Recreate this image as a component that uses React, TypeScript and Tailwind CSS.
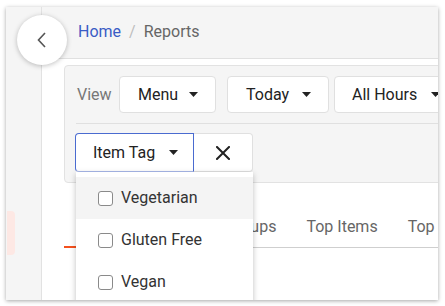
import React from "react";

function Caret() {
  return (
    <svg width="9" height="5" viewBox="0 0 9 5" className="shrink-0">
      <path d="M0 0 L9 0 L4.5 5 Z" fill="#222" />
    </svg>
  );
}

function Checkbox() {
  return <span className="w-[15px] h-[15px] rounded-[3px] border-[1.5px] border-[#8a8a8a] bg-white shrink-0" />;
}

export default function App() {
  return (
    <div
      className="w-[445px] h-[306px] bg-white overflow-hidden pt-[7px] pl-[6px]"
      style={{ fontFamily: "Roboto, 'Liberation Sans', sans-serif" }}
    >
      <div className="relative w-[432px] h-[293px] bg-white flex overflow-hidden shadow-[0_1px_4px_rgba(0,0,0,0.35)]">
        {/* sidebar */}
        <aside className="w-[36px] shrink-0 bg-[#f5f5f5] border-r border-[#e2e2e2] pt-[204px]">
          <div className="ml-[1px] w-[8px] h-[44px] rounded-r-[4px] bg-[#fde8e4]" />
        </aside>

        {/* main */}
        <main className="flex-1 min-w-0 flex flex-col">
          <header className="h-[52px] shrink-0 bg-[#f5f5f5] border-b border-[#e0e0e0] flex items-center pl-[36px] pb-[2px] text-[16px]">
            <span className="text-[#3a5cc5]">Home</span>
            <span className="text-[#bdbdbd] mx-[8px]">/</span>
            <span className="text-[#666]">Reports</span>
          </header>

          <div className="pl-[22px] pt-[6px]">
            {/* filter panel */}
            <div className="w-[420px] bg-[#f5f5f5] border border-[#e2e2e2] rounded-[4px] pl-[10px] pr-[11px] py-[10px]">
              <div className="flex items-center h-[37px]">
                <span className="text-[16px] text-[#777] ml-[2px] w-[42px]">View</span>
                <button className="h-[37px] w-[97px] bg-white border border-[#e0e0e0] rounded-[4px] flex items-center pl-[18px] pr-[17px] justify-between text-[16px] text-[#222]">
                  Menu <Caret />
                </button>
                <button className="ml-[11px] h-[37px] w-[102px] bg-white border border-[#e0e0e0] rounded-[4px] flex items-center pl-[18px] pr-[17px] justify-between text-[16px] text-[#222]">
                  Today <Caret />
                </button>
                <button className="ml-[5px] h-[37px] w-[120px] shrink-0 bg-white border border-[#e0e0e0] rounded-[4px] flex items-center pl-[17px] gap-[14px] text-[16px] text-[#222]">
                  All Hours <Caret />
                </button>
              </div>
              <div className="h-px bg-[#e0e0e0] mt-[10px] mb-[9px] ml-[1px]" />
              <div className="flex items-center">
                <div className="relative flex">
                  <button className="h-[39px] w-[119px] bg-white border border-[#4a6bd0] border-b-[#a9b9ea] rounded-l-[4px] flex items-center pl-[17px] pr-[15px] justify-between text-[16px] text-[#222]">
                    Item Tag <Caret />
                  </button>
                  <button className="h-[39px] w-[59px] bg-white border border-l-0 border-[#e0e0e0] rounded-r-[4px] flex items-center justify-center">
                    <svg width="14" height="14" viewBox="0 0 14 14">
                      <path d="M1 1 L13 13 M13 1 L1 13" stroke="#222" strokeWidth="2" strokeLinecap="square" />
                    </svg>
                  </button>
                  {/* dropdown */}
                  <div className="absolute z-10 top-full left-[1px] w-[177px] bg-white pt-[5px] shadow-[0_2px_6px_rgba(0,0,0,0.25)] text-[16px] text-[#333]">
                    <div className="h-[42px] bg-[#f4f4f4] flex items-center pl-[22px] gap-[8px]">
                      <Checkbox />
                      <span>Vegetarian</span>
                    </div>
                    <div className="h-[42px] flex items-center pl-[22px] gap-[8px]">
                      <Checkbox />
                      <span>Gluten Free</span>
                    </div>
                    <div className="h-[42px] flex items-center pl-[22px] gap-[8px]">
                      <Checkbox />
                      <span>Vegan</span>
                    </div>
                  </div>
                </div>
              </div>
            </div>

            {/* tabs */}
            <div className="mt-[24px] flex border-b border-[#cfcfcf] text-[16px] text-[#666] whitespace-nowrap">
              <div className="relative w-[102px] shrink-0 h-[40px] flex items-center justify-center">
                Summary
                <div className="absolute left-0 right-0 -bottom-px h-[2px] bg-[#f4511e]" />
              </div>
              <div className="h-[40px] px-[15px] shrink-0 flex items-center">Menu Groups</div>
              <div className="h-[40px] px-[15px] shrink-0 flex items-center">Top Items</div>
              <div className="h-[40px] px-[15px] shrink-0 flex items-center">Top Item Tags</div>
            </div>
          </div>
        </main>

        {/* back button */}
        <button className="absolute left-[11px] top-[8px] w-[50px] h-[50px] rounded-full bg-white shadow-[0_1px_5px_rgba(0,0,0,0.25)] flex items-center justify-center">
          <svg width="10" height="16" viewBox="0 0 10 16">
            <path d="M8 1 L1.5 8 L8 15" fill="none" stroke="#555" strokeWidth="1.6" />
          </svg>
        </button>
      </div>
    </div>
  );
}
